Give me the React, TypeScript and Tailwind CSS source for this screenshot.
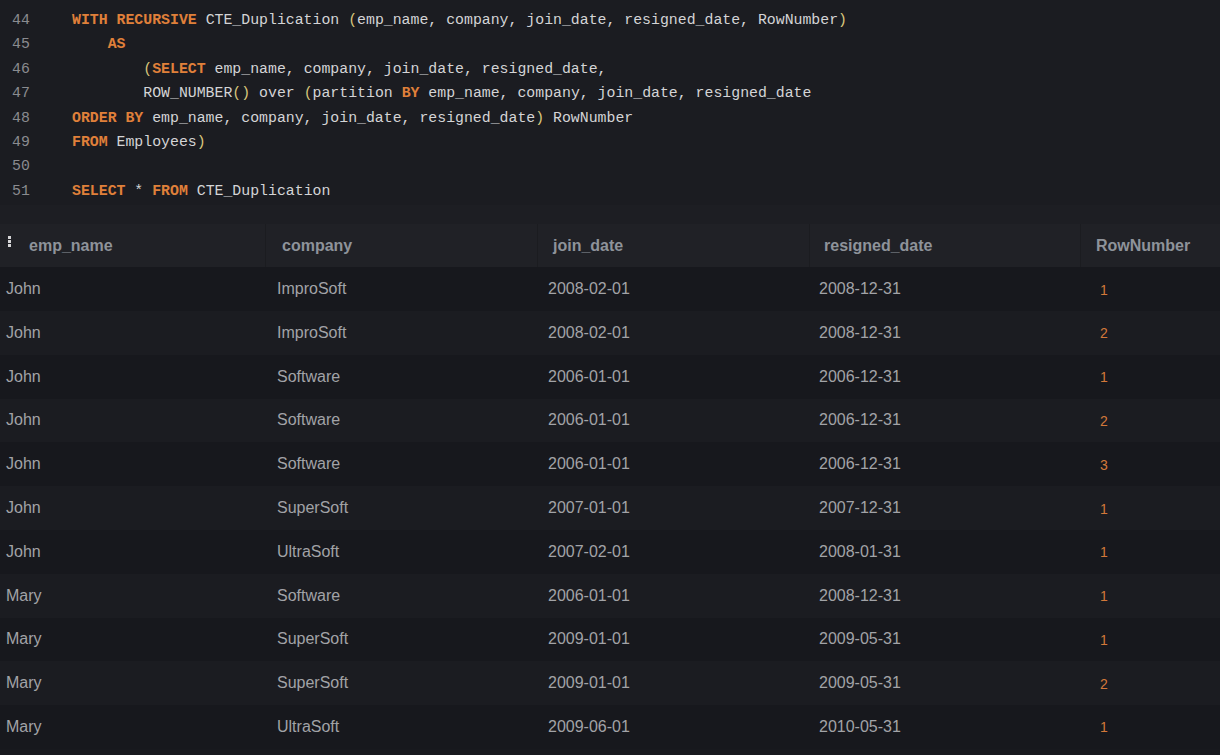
import React from "react";

// token kinds: k = keyword, p = paren, t = plain text
type Tok = [string, "k" | "p" | "t"];

const codeLines: { n: number; indent: number; toks: Tok[] }[] = [
  {
    n: 44,
    indent: 0,
    toks: [
      ["WITH RECURSIVE", "k"],
      [" CTE_Duplication ", "t"],
      ["(", "p"],
      ["emp_name, company, join_date, resigned_date, RowNumber", "t"],
      [")", "p"],
    ],
  },
  { n: 45, indent: 4, toks: [["AS", "k"]] },
  {
    n: 46,
    indent: 8,
    toks: [
      ["(", "p"],
      ["SELECT", "k"],
      [" emp_name, company, join_date, resigned_date,", "t"],
    ],
  },
  {
    n: 47,
    indent: 8,
    toks: [
      ["ROW_NUMBER", "t"],
      ["()", "p"],
      [" over ", "t"],
      ["(", "p"],
      ["partition ", "t"],
      ["BY", "k"],
      [" emp_name, company, join_date, resigned_date", "t"],
    ],
  },
  {
    n: 48,
    indent: 0,
    toks: [
      ["ORDER BY", "k"],
      [" emp_name, company, join_date, resigned_date", "t"],
      [")", "p"],
      [" RowNumber", "t"],
    ],
  },
  {
    n: 49,
    indent: 0,
    toks: [
      ["FROM", "k"],
      [" Employees", "t"],
      [")", "p"],
    ],
  },
  { n: 50, indent: 0, toks: [] },
  {
    n: 51,
    indent: 0,
    toks: [
      ["SELECT", "k"],
      [" * ", "t"],
      ["FROM", "k"],
      [" CTE_Duplication", "t"],
    ],
  },
];

const rows: [string, string, string, string, number][] = [
  ["John", "ImproSoft", "2008-02-01", "2008-12-31", 1],
  ["John", "ImproSoft", "2008-02-01", "2008-12-31", 2],
  ["John", "Software", "2006-01-01", "2006-12-31", 1],
  ["John", "Software", "2006-01-01", "2006-12-31", 2],
  ["John", "Software", "2006-01-01", "2006-12-31", 3],
  ["John", "SuperSoft", "2007-01-01", "2007-12-31", 1],
  ["John", "UltraSoft", "2007-02-01", "2008-01-31", 1],
  ["Mary", "Software", "2006-01-01", "2008-12-31", 1],
  ["Mary", "SuperSoft", "2009-01-01", "2009-05-31", 1],
  ["Mary", "SuperSoft", "2009-01-01", "2009-05-31", 2],
  ["Mary", "UltraSoft", "2009-06-01", "2010-05-31", 1],
];

function Token({ tok }: { tok: Tok }) {
  const [text, kind] = tok;
  if (kind === "k") return <span className="font-bold text-[#e0803a]">{text}</span>;
  if (kind === "p") return <span className="text-[#d9c67c]">{text}</span>;
  return <span className="text-[#d4d4d6]">{text}</span>;
}

function DragHandle() {
  return (
    <svg width="4" height="11" viewBox="0 0 4 11" className="mt-[-8px]">
      <rect x="0" y="0" width="3" height="3" fill="#d6d6d8" />
      <rect x="0" y="4" width="3" height="3" fill="#d6d6d8" />
      <rect x="0" y="8" width="3" height="3" fill="#d6d6d8" />
    </svg>
  );
}

export default function App() {
  return (
    <div className="flex h-[755px] w-[1220px] flex-col overflow-hidden bg-[#18191e]">
      {/* Editor */}
      <div
        className="bg-[#1b1c21] pb-[2px] pt-[8px] text-[14.85px] leading-[24.4px]"
        style={{ fontFamily: '"Liberation Mono", "DejaVu Sans Mono", monospace' }}
      >
        {codeLines.map((line) => (
          <div key={line.n} className="flex h-[24.4px] whitespace-pre">
            <span className="w-[72px] pl-[12px] text-[#8a8b8f]">{line.n}</span>
            <span>
              {" ".repeat(line.indent)}
              {line.toks.map((t, i) => (
                <Token key={i} tok={t} />
              ))}
            </span>
          </div>
        ))}
      </div>

      {/* spacer band */}
      <div className="h-[19px] bg-[#1d1e23]" />

      {/* Result grid */}
      <div style={{ fontFamily: '"Liberation Sans", Arial, sans-serif' }}>
        <div className="grid h-[43px] grid-cols-[266px_272px_272px_271px_1fr] bg-[#202126] text-[16px] font-bold text-[#8e939a]">
          <div className="flex items-center border-r border-[#1b1c20] pl-[8px]">
            <DragHandle />
            <span className="ml-[17px]">emp_name</span>
          </div>
          <div className="flex items-center border-r border-[#1b1c20] pl-[16px]">company</div>
          <div className="flex items-center border-r border-[#1b1c20] pl-[15px]">join_date</div>
          <div className="flex items-center border-r border-[#1b1c20] pl-[14px]">resigned_date</div>
          <div className="flex items-center pl-[15px]">RowNumber</div>
        </div>

        {rows.map((r, i) => (
          <div
            key={i}
            className={`grid h-[43.8px] grid-cols-[266px_272px_272px_271px_1fr] items-center text-[16px] text-[#a2a3a7] ${
              i % 2 === 0 ? "bg-[#17181d]" : "bg-[#1b1c21]"
            }`}
          >
            <div className="pl-[6px]">{r[0]}</div>
            <div className="pl-[11px]">{r[1]}</div>
            <div className="pl-[10px]">{r[2]}</div>
            <div className="pl-[9px]">{r[3]}</div>
            <div className="pl-[19px] pt-[2px] text-[14px] text-[#d2783a]">{r[4]}</div>
          </div>
        ))}
      </div>
    </div>
  );
}
